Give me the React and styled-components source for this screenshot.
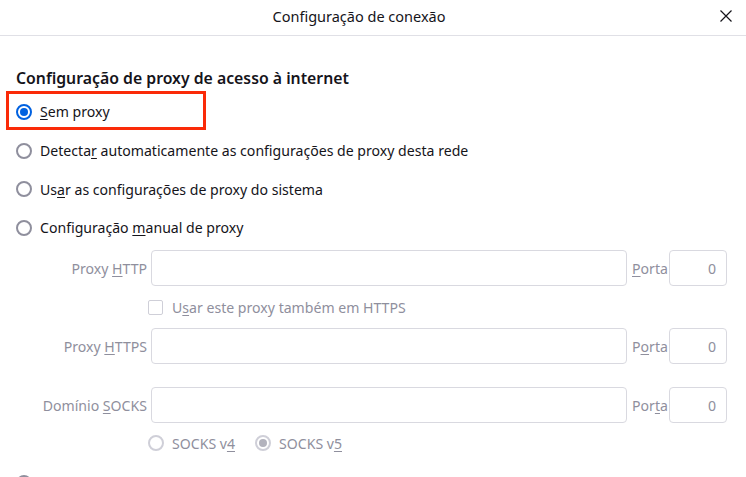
import React from "react";
import styled, { createGlobalStyle } from "styled-components";

const GlobalStyle = createGlobalStyle`
  html, body {
    margin: 0;
    padding: 0;
    background: #ffffff;
    overflow: hidden;
  }
  body {
    font-family: "Noto Sans", "Open Sans", sans-serif;
    color: #15141a;
  }
`;

const Dialog = styled.div`
  width: 746px;
  height: 477px;
  overflow: hidden;
  background: #fff;
`;

const Header = styled.header`
  position: relative;
  height: 35px;
  border-bottom: 1px solid #e0e0e6;
  display: flex;
  align-items: center;
  justify-content: center;
  padding-right: 28px;

  h1 {
    margin: 0 0 3px;
    font-size: 14.5px;
    font-weight: 400;
    color: #15141a;
  }
`;

const CloseButton = styled.button`
  position: absolute;
  right: 9px;
  top: 5px;
  width: 22px;
  height: 22px;
  border: none;
  background: none;
  padding: 0;
  display: flex;
  align-items: center;
  justify-content: center;
  cursor: pointer;
`;

const Body = styled.div`
  padding: 30px 19px 0 16px;
`;

const SectionTitle = styled.h2`
  margin: 0 0 2px;
  font-size: 15.8px;
  line-height: 24px;
  font-weight: 600;
  color: #15141a;
`;

const Option = styled.label`
  position: relative;
  display: flex;
  align-items: center;
  gap: 8px;
  height: ${(p) => p.$h || 39}px;
  font-size: 14.1px;
  color: #15141a;
`;

const Radio = styled.span`
  box-sizing: border-box;
  flex: none;
  width: 16px;
  height: 16px;
  border-radius: 50%;
  border: 2px solid
    ${(p) => (p.$disabled ? "#cfcfd8" : p.$checked ? "#0061e0" : "#8f8f9d")};
  display: flex;
  align-items: center;
  justify-content: center;

  &::after {
    content: "";
    display: ${(p) => (p.$checked ? "block" : "none")};
    width: 8px;
    height: 8px;
    border-radius: 50%;
    background: ${(p) => (p.$disabled ? "#b3b3bd" : "#0061e0")};
  }
`;

const Highlight = styled.span`
  position: absolute;
  left: -10px;
  top: -1px;
  width: 194px;
  height: 33px;
  border: 3px solid #fa2a08;
  pointer-events: none;
`;

const Key = styled.u`
  text-underline-offset: 2px;
`;

const Manual = styled.div`
  margin-top: 3px;
  padding-left: 24px;
  display: grid;
  grid-template-columns: 107px 1fr 34px 58px;
  column-gap: 4px;
  align-items: center;
  color: #8f8f9d;
  font-size: 14.1px;
`;

const FieldLabel = styled.span`
  text-align: right;
  white-space: nowrap;
`;

const TextBox = styled.div`
  box-sizing: border-box;
  height: 36px;
  border: 1px solid #d9d9e0;
  border-radius: 4px;
  background: #fff;
  display: flex;
  align-items: center;
  justify-content: flex-end;
  padding: 0 10px;
  color: #8f8f9d;
`;

const PortLabel = styled.span`
  padding-left: 1px;
`;

const SubRow = styled.div`
  grid-column: 2 / 5;
  display: flex;
  align-items: center;
  gap: 9px;
  height: ${(p) => p.$h}px;
  margin-left: -3px;
`;

const Check = styled.span`
  box-sizing: border-box;
  width: 15px;
  height: 15px;
  border: 1.5px solid #cfcfd8;
  border-radius: 2px;
`;

const Spacer = styled.div`
  grid-column: 1 / 5;
  height: ${(p) => p.$h}px;
`;

const SocksItem = styled.span`
  display: flex;
  align-items: center;
  gap: 8px;
  margin-right: 11px;
`;

export default function App() {
  return (
    <Dialog>
      <GlobalStyle />
      <Header>
        <h1>Configuração de conexão</h1>
        <CloseButton aria-label="Fechar">
          <svg width="14" height="14" viewBox="0 0 14 14">
            <path d="M1.5 1.5L12.5 12.5M12.5 1.5L1.5 12.5" stroke="#15141a" strokeWidth="1.2" />
          </svg>
        </CloseButton>
      </Header>
      <Body>
        <SectionTitle>Configuração de proxy de acesso à internet</SectionTitle>
        <Option>
          <Highlight />
          <Radio $checked />
          <span>
            <Key>S</Key>em proxy
          </span>
        </Option>
        <Option>
          <Radio />
          <span>
            Detecta<Key>r</Key> automaticamente as configurações de proxy desta rede
          </span>
        </Option>
        <Option $h={38}>
          <Radio />
          <span>
            Us<Key>a</Key>r as configurações de proxy do sistema
          </span>
        </Option>
        <Option>
          <Radio />
          <span>
            Configuração <Key>m</Key>anual de proxy
          </span>
        </Option>
        <Manual>
          <FieldLabel>
            Proxy <Key>H</Key>TTP
          </FieldLabel>
          <TextBox />
          <PortLabel>
            <Key>P</Key>orta
          </PortLabel>
          <TextBox>0</TextBox>

          <span />
          <SubRow $h={42}>
            <Check />
            <span>
              U<Key>s</Key>ar este proxy também em HTTPS
            </span>
          </SubRow>

          <FieldLabel>
            Proxy <Key>H</Key>TTPS
          </FieldLabel>
          <TextBox />
          <PortLabel>
            P<Key>o</Key>rta
          </PortLabel>
          <TextBox>0</TextBox>

          <Spacer $h={23} />

          <FieldLabel>
            Domínio <Key>S</Key>OCKS
          </FieldLabel>
          <TextBox />
          <PortLabel>
            Por<Key>t</Key>a
          </PortLabel>
          <TextBox>0</TextBox>

          <span />
          <SubRow $h={40}>
            <SocksItem>
              <Radio $disabled />
              <span>
                SOCKS v<Key>4</Key>
              </span>
            </SocksItem>
            <SocksItem>
              <Radio $disabled $checked />
              <span>
                SOCKS v<Key>5</Key>
              </span>
            </SocksItem>
          </SubRow>
        </Manual>
        <Option>
          <Radio />
        </Option>
      </Body>
    </Dialog>
  );
}
